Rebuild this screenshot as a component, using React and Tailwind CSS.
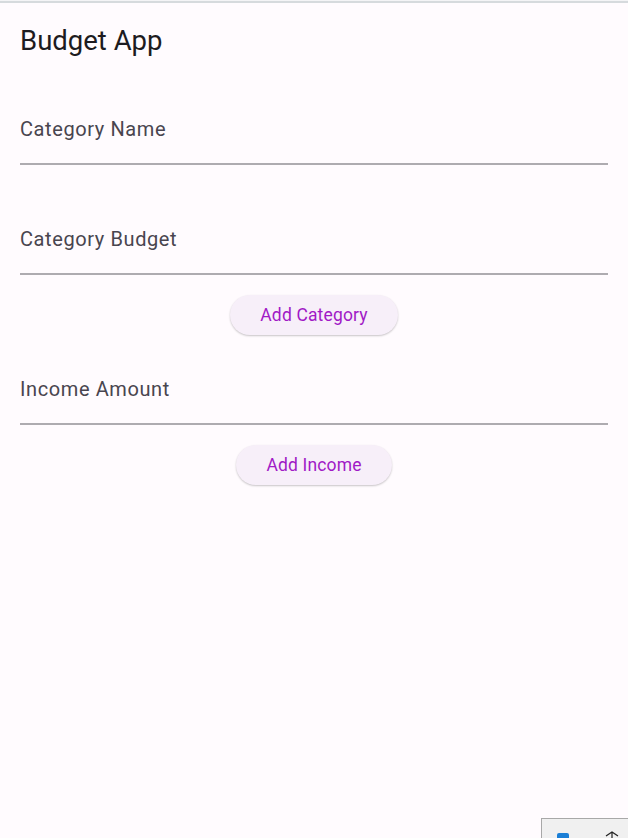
import React from 'react';

const Field = ({ label, className = '' }) => (
  <div className={`flex flex-col h-[60px] ${className}`}>
    <div className="flex-1 flex items-start pt-[12px]">
      <span className="text-[20px] leading-[24px] tracking-[0.6px] text-[#49454f]">{label}</span>
    </div>
    <div className="h-[2px] bg-[#aeabb0]" />
  </div>
);

const PillButton = ({ children, className = '' }) => (
  <div className={`flex justify-center ${className}`}>
    <button className="h-[40px] px-[30px] rounded-full bg-[#f7eff9] text-[#a11ac6] text-[17.5px] font-normal tracking-[0.15px] shadow-[0_1px_2px_rgba(0,0,0,0.22)]">
      {children}
    </button>
  </div>
);

export default function App() {
  return (
    <div
      className="relative w-[628px] h-[838px] overflow-hidden bg-[#fffbfe]"
      style={{ fontFamily: 'Roboto, "Noto Sans", sans-serif' }}
    >
      <div className="h-px bg-[#f4f4f6]" />
      <div className="h-[2px] bg-[#d6dadd]" />

      {/* App bar */}
      <div className="h-[72px] flex items-center px-[20px] pt-[4px]">
        <h1 className="text-[27.5px] leading-none text-[#1d1b20]">Budget App</h1>
      </div>

      {/* Form */}
      <div className="flex flex-col px-[20px] pt-[30px]">
        <Field label="Category Name" />
        <Field label="Category Budget" className="mt-[50px]" />
        <PillButton className="mt-[20px]">Add Category</PillButton>
        <Field label="Income Amount" className="mt-[30px]" />
        <PillButton className="mt-[20px]">Add Income</PillButton>
      </div>

      {/* taskbar fragment */}
      <div className="absolute left-[541px] top-[818px] w-[100px] h-[30px] bg-[#f0f0f0] border-t border-l border-[#a8a8a8]">
        <div className="absolute left-[15px] top-[14px] w-[12px] h-[10px] rounded-[2px] bg-[#1b7fd6]" />
        <svg className="absolute left-[62px] top-[12px]" width="16" height="12" viewBox="0 0 16 12">
          <path d="M2 5 L8 1 L14 5 M8 1 V10" fill="none" stroke="#222" strokeWidth="1.2" />
        </svg>
      </div>
    </div>
  );
}
